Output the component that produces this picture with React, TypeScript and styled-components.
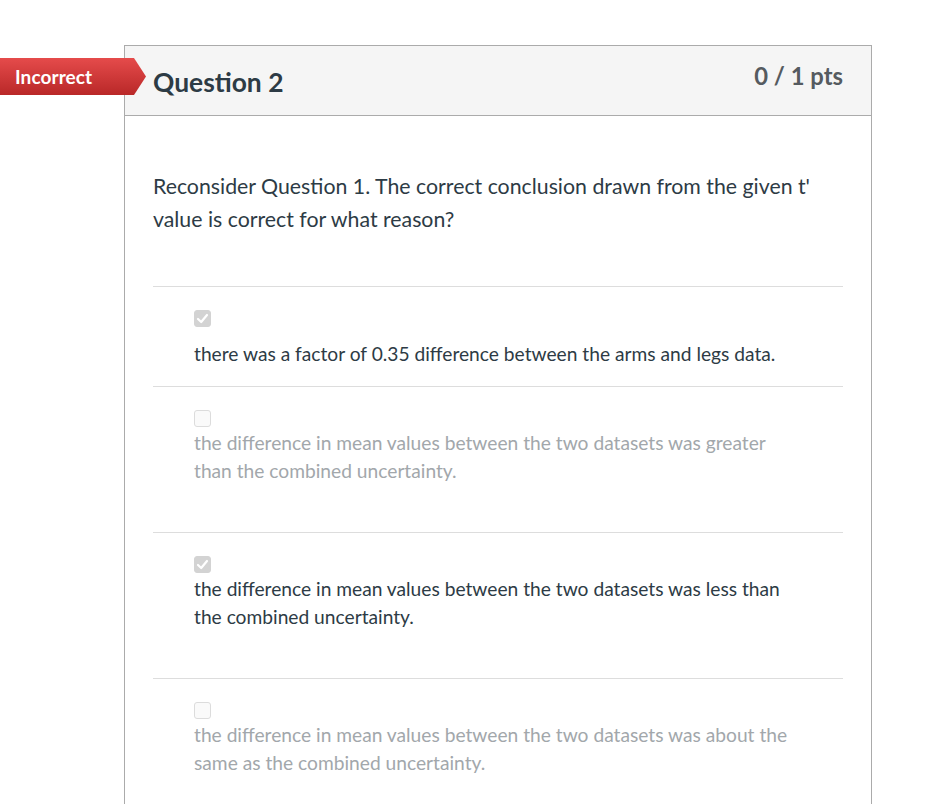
import { createGlobalStyle, styled } from 'styled-components';

const GlobalStyle = createGlobalStyle`
  html, body {
    margin: 0;
    padding: 0;
    background: #ffffff;
    overflow: hidden;
  }
  body {
    font-family: Lato, "Open Sans", sans-serif;
    color: #2d3b45;
  }
`;

const Pagina = styled.div`
  padding: 45px 0 0 124px;
  width: 748px;
`;

const Card = styled.div`
  position: relative;
  border: 1px solid #ababab;
  border-bottom: none;
  background: #ffffff;
`;

const Badge = styled.div`
  position: absolute;
  left: -125px;
  top: 12px;
  width: 146px;
  height: 37px;
  padding-left: 15px;
  box-sizing: border-box;
  display: flex;
  align-items: center;
  background: linear-gradient(#e54b4b, #b92828);
  clip-path: polygon(0 0, 134px 0, 146px 50%, 134px 100%, 0 100%);
  color: #ffffff;
  font-size: 19px;
  font-weight: 700;
  letter-spacing: 0.1px;
`;

const Header = styled.div`
  height: 70px;
  box-sizing: border-box;
  padding: 0 28px;
  background: #f5f5f5;
  border-bottom: 1px solid #ababab;
  display: flex;
  justify-content: space-between;
  align-items: flex-start;
`;

const QuestionName = styled.h2`
  margin: 20px 0 0;
  font-size: 26.4px;
  font-weight: 700;
  line-height: 32px;
  color: #2d3b45;
`;

const Points = styled.div`
  margin-top: 14px;
  font-size: 23.8px;
  font-weight: 700;
  line-height: 32px;
  color: #555b60;
`;

const Body = styled.div`
  padding: 54px 28px 0;
`;

const QuestionText = styled.p`
  margin: 0 0 50px;
  font-size: 21.3px;
  line-height: 33px;
  color: #2d3b45;
`;

const Answer = styled.div<{ $gap: number; $tail: number }>`
  border-top: 1px solid #dddddd;
  padding: 23px 0 ${(p) => p.$tail}px 41px;
  display: flex;
  flex-direction: column;
  gap: ${(p) => p.$gap}px;
`;

const Box = styled.span<{ $checked: boolean }>`
  width: 17px;
  height: 17px;
  box-sizing: border-box;
  border-radius: 3px;
  display: flex;
  align-items: center;
  justify-content: center;
  background: ${(p) => (p.$checked ? '#d3d3d3' : '#fafafa')};
  border: 1px solid ${(p) => (p.$checked ? '#d3d3d3' : '#dcdcdc')};
`;

const AnswerText = styled.div<{ $checked: boolean }>`
  max-width: 605px;
  font-size: 19.2px;
  line-height: 28px;
  color: ${(p) => (p.$checked ? '#2d3b45' : '#a2a7ab')};
`;

const answers = [
  {
    text: 'there was a factor of 0.35 difference between the arms and legs data.',
    checked: true,
    gap: 13,
    tail: 18,
  },
  {
    text: 'the difference in mean values between the two datasets was greater than the combined uncertainty.',
    checked: false,
    gap: 2,
    tail: 47,
  },
  {
    text: 'the difference in mean values between the two datasets was less than the combined uncertainty.',
    checked: true,
    gap: 2,
    tail: 47,
  },
  {
    text: 'the difference in mean values between the two datasets was about the same as the combined uncertainty.',
    checked: false,
    gap: 2,
    tail: 47,
  },
];

function Check() {
  return (
    <svg width="13" height="13" viewBox="0 0 13 13">
      <path d="M2 7 L5.2 10 L11 3" fill="none" stroke="#ffffff" strokeWidth="2.2" strokeLinecap="round" strokeLinejoin="round" />
    </svg>
  );
}

function App() {
  return (
    <Pagina>
      <GlobalStyle />
      <Card>
        <Badge>Incorrect</Badge>
        <Header>
          <QuestionName>Question 2</QuestionName>
          <Points>0 / 1 pts</Points>
        </Header>
        <Body>
          <QuestionText>
            Reconsider Question 1. The correct conclusion drawn from the given t' value is correct for what reason?
          </QuestionText>
          {answers.map((a) => (
            <Answer key={a.text} $gap={a.gap} $tail={a.tail}>
              <Box $checked={a.checked}>{a.checked && <Check />}</Box>
              <AnswerText $checked={a.checked}>{a.text}</AnswerText>
            </Answer>
          ))}
        </Body>
      </Card>
    </Pagina>
  );
}

export default App;
